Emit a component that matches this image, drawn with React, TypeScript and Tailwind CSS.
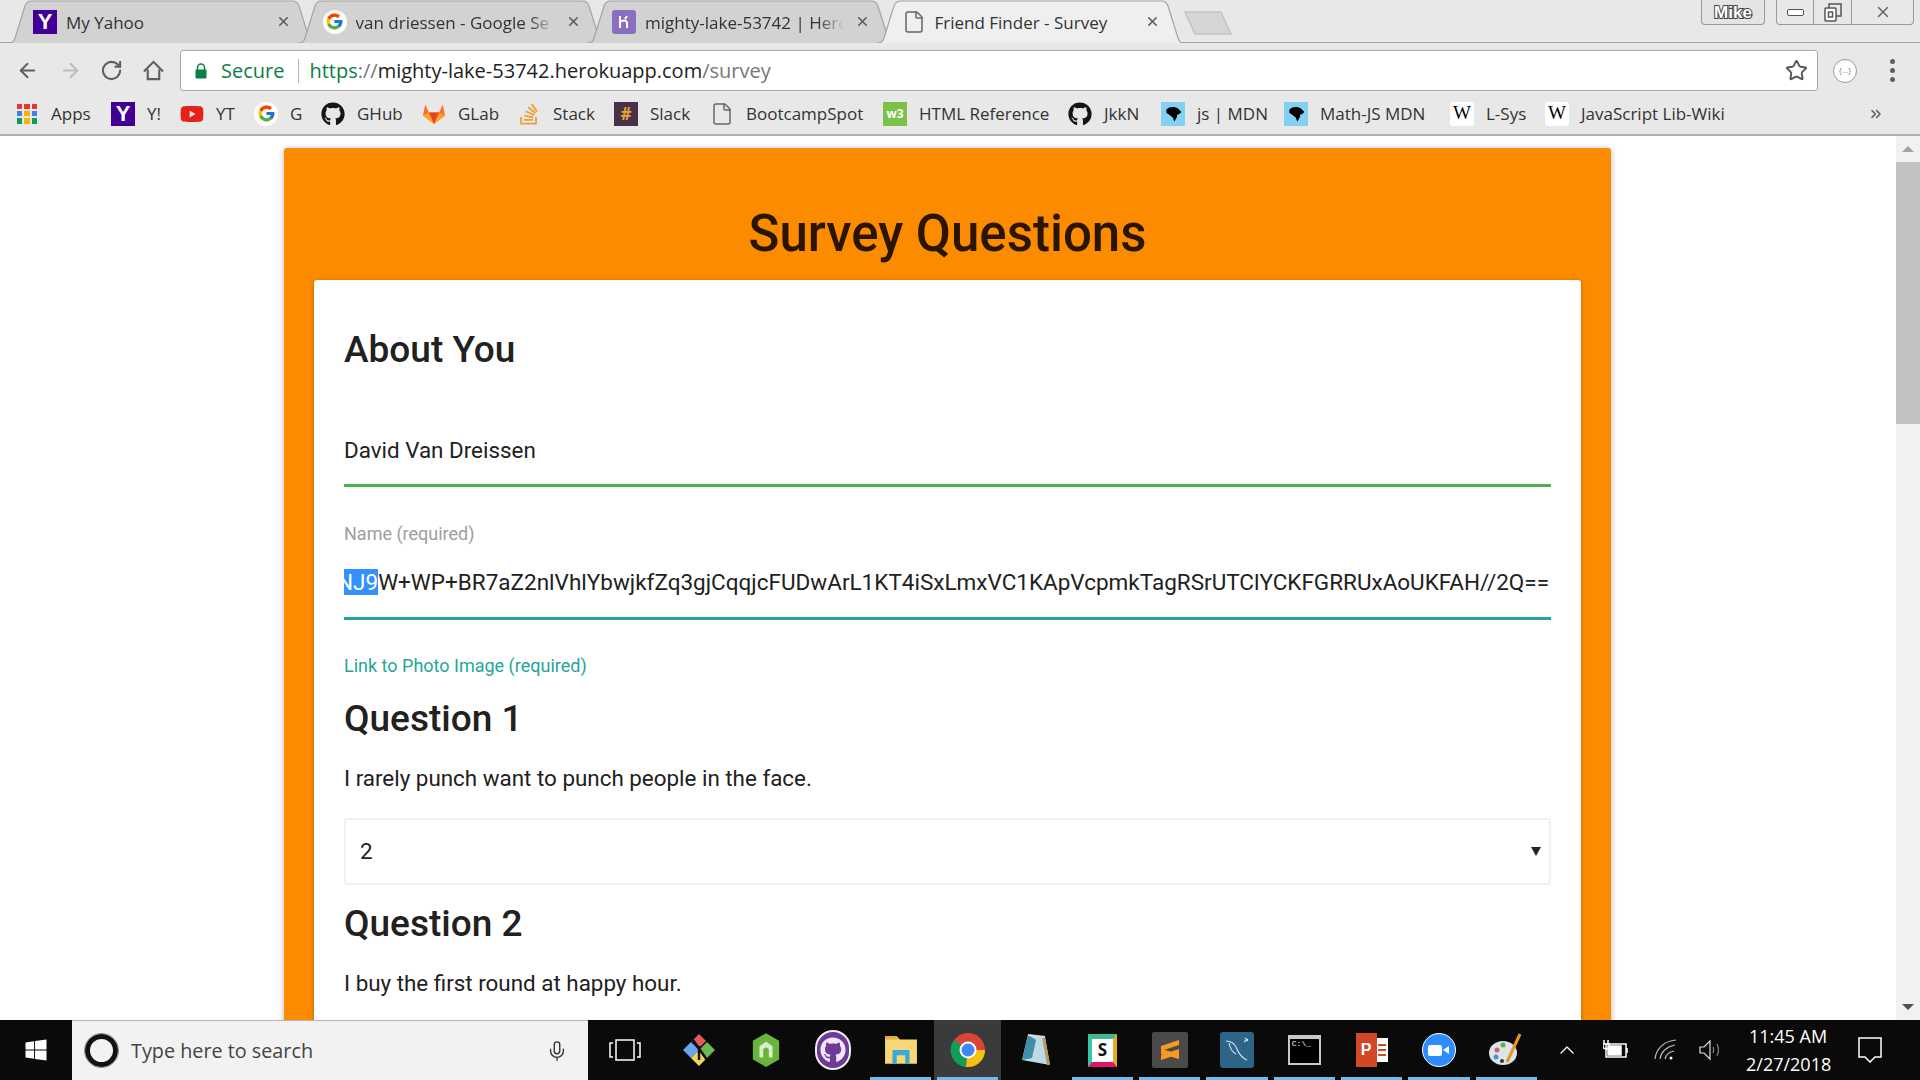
import React from 'react';
import { ArrowLeft, ArrowRight, RotateCw, Star, X, ChevronUp, ChevronsRight, Mic, File } from 'lucide-react';
import { FaGithub, FaStackOverflow, FaYoutube, FaWindows } from 'react-icons/fa';
import { FcGoogle } from 'react-icons/fc';

const chromeFont = "font-['Open_Sans',sans-serif]";

const YahooIcon = ({ size }: { size: string }) => (
  <span className={`${size} flex items-center justify-center bg-[#410093] text-white font-bold text-[22px] font-['Liberation_Sans',sans-serif]`}>Y</span>
);

const GoogleIcon = () => (
  <span className="w-6 h-6 rounded-full bg-white flex items-center justify-center">
    <FcGoogle className="w-[19px] h-[19px]" />
  </span>
);

const GitlabIcon = () => (
  <svg viewBox="0 0 24 24" className="w-6 h-6">
    <path d="M12 22 1 13.5l2.2-11 3.6 8h10.4l3.6-8 2.2 11z" fill="#fc6d26" />
    <path d="M12 22 6.8 10.5h10.4z" fill="#e24329" />
    <path d="M12 22 1 13.5l5.8-3z" fill="#fca326" />
    <path d="M12 22l11-8.500-5.800-3z" fill="#fca326" />
  </svg>
);

const HerokuIcon = () => (
  <span className="w-6 h-6 rounded-[3px] bg-[#8a6fc0] flex items-center justify-center">
    <svg viewBox="0 0 16 16" className="w-4 h-4" fill="none" stroke="#fff" strokeWidth="2">
      <path d="M4 2v12M4 8c3-2 7-2 7 1v5M11 2 9 5" />
    </svg>
  </span>
);

const MdnIcon = () => (
  <span className="w-6 h-6 bg-[#83d0f2] flex items-center justify-center">
    <svg viewBox="0 0 24 24" className="w-[19px] h-[19px]" fill="#000">
      <path d="M3 7c4-4 11-4 15-1l4 4-3 3-2 0-1 4-3 5-2-5-4-3-4-3z" />
    </svg>
  </span>
);

const WikiIcon = () => (
  <span className="w-6 h-6 rounded-[3px] bg-white flex items-center justify-center text-[19px] text-black font-['Liberation_Serif',serif]">W</span>
);

const AppsIcon = () => {
  const colors = ['#e33b2e', '#e33b2e', '#e33b2e', '#3f7fe8', '#f4b400', '#3f7fe8', '#0f9d58', '#f4b400', '#0f9d58'];
  return (
    <span className="w-5 h-5 mr-[2px] grid grid-cols-3 gap-[2px]">
      {colors.map((c, i) => (
        <span key={i} className="block" style={{ backgroundColor: c }} />
      ))}
    </span>
  );
};

const bookmarks = [
  { label: 'Apps', width: 'w-[41px]', icon: <AppsIcon /> },
  { label: 'Y!', width: 'w-[14px]', icon: <YahooIcon size="w-6 h-6" /> },
  { label: 'YT', width: 'w-[19px]', icon: <FaYoutube className="w-6 h-6 text-[#e62117]" /> },
  { label: 'G', width: 'w-[12px]', icon: <GoogleIcon /> },
  { label: 'GHub', width: 'w-[46px]', icon: <FaGithub className="w-6 h-6 text-[#161514]" /> },
  { label: 'GLab', width: 'w-[40px]', icon: <GitlabIcon /> },
  { label: 'Stack', width: 'w-[42px]', icon: <FaStackOverflow className="w-6 h-6 text-[#e8a33d]" /> },
  {
    label: 'Slack',
    width: 'w-[41px]',
    icon: <span className="w-6 h-6 bg-[#4a3146] flex items-center justify-center text-[#e0a63a] font-bold text-[17px]">#</span>,
  },
  { label: 'BootcampSpot', width: 'w-[118px]', icon: <File className="w-6 h-6 text-[#666]" strokeWidth={1.5} /> },
  {
    label: 'HTML Reference',
    width: 'w-[130px]',
    icon: <span className="w-6 h-6 bg-[#7cc24a] flex items-center justify-center text-white font-bold text-[12px]">w3</span>,
  },
  { label: 'JkkN', width: 'w-[38px]', icon: <FaGithub className="w-6 h-6 text-[#161514]" /> },
  { label: 'js | MDN', width: 'w-[68px]', icon: <MdnIcon /> },
  { label: 'Math-JS MDN', width: 'w-[111px]', icon: <MdnIcon /> },
  { label: 'L-Sys', width: 'w-[40px]', icon: <WikiIcon /> },
  { label: 'JavaScript Lib-Wiki', width: 'w-[149px]', icon: <WikiIcon /> },
];

const TabShape = ({ active }: { active: boolean }) => (
  <svg viewBox="0 0 308 43" className="absolute inset-0 w-full h-full">
    <path
      d="M0 43 C5 43 6 41 7 38 L17 6 C18 3 20 1 24 1 L284 1 C288 1 290 3 291 6 L301 38 C302 41 303 43 308 43"
      fill={active ? '#efefef' : '#d2d2d2'}
      stroke="#a4a4a4"
      strokeWidth="1.200"
    />
  </svg>
);

const Tab = ({ title, icon, active = false, first = false, fade = false }: { title: string; icon: React.ReactNode; active?: boolean; first?: boolean; fade?: boolean }) => (
  <div className={`relative w-[308px] h-[43px] shrink-0 ${first ? '' : '-ml-[18.5px]'} ${active ? 'z-10' : ''}`}>
    <TabShape active={active} />
    <div className="relative h-full flex items-center pl-[25px] pr-[25px] gap-[9px]">
      {icon}
      <span
        className={`flex-1 min-w-0 pt-[2px] whitespace-nowrap text-[17px] text-[#333] ${chromeFont} ${fade ? '[mask-image:linear-gradient(to_right,black_86%,transparent_99%)]' : ''}`}
      >
        {title}
      </span>
      <X className="w-[15px] h-[15px] text-[#5a5a5a] shrink-0" strokeWidth={2.500} />
    </div>
  </div>
);

const TabStrip = () => (
  <div className="h-[43px] relative flex pl-2 bg-[#e8e8e8] border-b border-[#a4a4a4]">
    <Tab first title="My Yahoo" icon={<YahooIcon size="w-6 h-6 shrink-0" />} />
    <Tab fade title="van driessen - Google Se" icon={<span className="shrink-0"><GoogleIcon /></span>} />
    <Tab fade title="mighty-lake-53742 | Herc" icon={<span className="shrink-0"><HerokuIcon /></span>} />
    <Tab active title="Friend Finder - Survey" icon={<File className="w-6 h-6 text-[#666] shrink-0" strokeWidth={1.500} />} />
    <svg viewBox="0 0 50 24" className="w-[50px] h-[24px] mt-[11px] -translate-x-[2px] shrink-0">
      <path d="M2 1h36l10 22H12z" fill="#d6d6d6" stroke="#c2c2c2" strokeWidth="1.500" strokeLinejoin="round" />
    </svg>
    <div className="ml-auto flex items-start pr-[6px]">
      <div className="w-[64px] h-[25px] border border-t-0 border-[#9a9a9a] rounded-b-[4px] bg-[#e4e4e4] text-center text-[17px] leading-[25px] font-bold text-white [-webkit-text-stroke:2px_#444] [paint-order:stroke_fill] font-['Liberation_Sans',sans-serif]">
        Mike
      </div>
      <div className="ml-[11px] w-[138px] h-[25px] flex border border-t-0 border-[#9a9a9a] rounded-b-[4px]">
        <div className="w-[37px] flex items-center justify-center border-r border-[#9a9a9a]">
          <span className="w-[17px] h-[7px] rounded-[2px] border border-[#555] bg-white" />
        </div>
        <div className="w-[38px] flex items-center justify-center border-r border-[#9a9a9a]">
          <svg viewBox="0 0 18 20" className="w-[18px] h-[20px]" fill="none" stroke="#555" strokeWidth="1.500">
            <rect x="1" y="6" width="11" height="13" rx="1" fill="#fff" />
            <path d="M5 6V2h12v12h-5" />
            <rect x="4.500" y="10" width="4" height="5" />
          </svg>
        </div>
        <div className="flex-1 flex items-center justify-center">
          <X className="w-[18px] h-[18px] text-[#666]" strokeWidth={2} />
        </div>
      </div>
    </div>
  </div>
);

const Toolbar = () => (
  <div className="h-[48px] pt-[7px] flex items-center bg-[#e8e8e8] pl-[16px]">
    <ArrowLeft className="w-[23px] h-[23px] text-[#5f5f5f]" strokeWidth={2} />
    <ArrowRight className="w-[23px] h-[23px] text-[#bdbdbd] ml-[20px]" strokeWidth={2} />
    <RotateCw className="w-[23px] h-[23px] text-[#5f5f5f] ml-[18px]" strokeWidth={2.200} />
    <svg viewBox="0 0 24 24" className="w-[23px] h-[23px] ml-[19px]" fill="none" stroke="#5f5f5f" strokeWidth="2.200">
      <path d="M2 13 12 3l10 10M6 11v10h12V11" />
    </svg>
    <div className="ml-[15px] w-[1638px] h-[41px] bg-white border border-[#a9a9a9] rounded-[3px] flex items-center pl-[14px] pr-[9px]">
      <svg viewBox="0 0 12 16" className="w-[12px] h-[16px]">
        <path d="M2.500 7V4.500a3.500 3.500 0 0 1 7 0V7" fill="none" stroke="#0b8043" strokeWidth="1.500" />
        <rect x="0.500" y="6.500" width="11" height="9" rx="1" fill="#0b8043" />
      </svg>
      <span className={`ml-[14px] text-[20px] text-[#0b8043] ${chromeFont}`}>Secure</span>
      <span className="ml-[14px] w-px h-[24px] bg-[#b5b5b5]" />
      <span className={`ml-[10px] flex-1 text-[20px] whitespace-nowrap ${chromeFont}`}>
        <span className="text-[#0b8043]">https</span>
        <span className="text-[#777]">://</span>
        <span className="text-[#222]">mighty-lake-53742.herokuapp.com</span>
        <span className="text-[#777]">/survey</span>
      </span>
      <Star className="w-[23px] h-[23px] text-[#555]" strokeWidth={2} />
    </div>
    <div className="ml-[15px] w-[24px] h-[24px] rounded-full border border-[#999] bg-white flex items-center justify-center text-[8px] text-[#888] font-['Liberation_Sans',sans-serif]">
      {'{...}'}
    </div>
    <div className="ml-[33px] flex flex-col gap-[4px]">
      <span className="w-[5px] h-[5px] rounded-full bg-[#5f5f5f]" />
      <span className="w-[5px] h-[5px] rounded-full bg-[#5f5f5f]" />
      <span className="w-[5px] h-[5px] rounded-full bg-[#5f5f5f]" />
    </div>
  </div>
);

const BookmarksBar = () => (
  <div className="h-[45px] pt-[2px] flex items-center bg-[#e8e8e8] border-b-2 border-[#b0b0b0] pl-[17px] pr-[36px] gap-[19px]">
    {bookmarks.map((b) => (
      <div key={b.label} className="flex items-center gap-[12px] shrink-0">
        {b.icon}
        <span className={`${b.width} whitespace-nowrap text-[17px] text-[#333] ${chromeFont}`}>{b.label}</span>
      </div>
    ))}
    <ChevronsRight className="ml-auto w-[16px] h-[16px] text-[#666]" strokeWidth={2.500} />
  </div>
);

const Scrollbar = () => (
  <div className="w-[24px] shrink-0 bg-[#f1f1f1] flex flex-col items-center relative">
    <div className="h-[26px] flex items-center justify-center">
      <span className="border-x-[6px] border-x-transparent border-b-[6px] border-b-[#a3a3a3]" />
    </div>
    <div className="w-full h-[262px] bg-[#c1c1c1]" />
    <div className="mt-auto h-[26px] flex items-center justify-center">
      <span className="border-x-[6px] border-x-transparent border-t-[6px] border-t-[#505050]" />
    </div>
  </div>
);

const Question = ({ title, text, value }: { title: string; text: string; value?: string }) => (
  <div>
    <h4 className="text-[37px] leading-[44px] font-medium text-[#212121]">{title}</h4>
    <p className="mt-[23px] text-[22.400px] leading-[29px] text-[#212121]">{text}</p>
    {value && (
      <div className="mt-[25px] h-[67px] border-2 border-[#f1f1f1] rounded-[3px] flex items-center justify-between pl-[14px] pr-[8px] text-[22.400px] text-[#212121]">
        <span>{value}</span>
        <span className="border-x-[5px] border-x-transparent border-t-[9px] border-t-[#222]" />
      </div>
    )}
  </div>
);

const Survey = () => (
  <div className="flex-1 min-w-0 overflow-hidden bg-white pt-[12px] pr-[1px] font-['Roboto',sans-serif]">
    <div className="mx-auto w-[1327px] bg-[#fd8b00] rounded-[3px] px-[30px] shadow-[0_1px_6px_rgba(0,0,0,0.3)]">
      <h1 className="h-[132px] flex items-center justify-center pt-[40px] text-[51px] font-medium text-[#2a1600]">Survey Questions</h1>
      <div className="bg-white rounded-[3px] px-[30px] pb-[120px] shadow-[0_1px_4px_rgba(0,0,0,0.3)]">
        <h2 className="pt-[47px] text-[37px] leading-[46px] font-medium text-[#212121]">About You</h2>
        <div className="mt-[60px] h-[34px] leading-[34px] text-[22.400px] text-[#212121]">David Van Dreissen</div>
        <div className="mt-[17px] h-[3px] bg-[#4caf50]" />
        <div className="mt-[35px] text-[18px] leading-[24px] text-[#9e9e9e]">Name (required)</div>
        <div className="mt-[23px] h-[27px] leading-[27px] overflow-hidden whitespace-nowrap text-[22.500px] text-[#212121]">
          <div className="-ml-[7px]">
            <span className="bg-[#3390ff] text-white">NJ9</span>
            W+WP+BR7aZ2nlVhlYbwjkfZq3gjCqqjcFUDwArL1KT4iSxLmxVC1KApVcpmkTagRSrUTClYCKFGRRUxAoUKFAH//2Q==
          </div>
        </div>
        <div className="mt-[21px] h-[3px] bg-[#26a69a]" />
        <div className="mt-[34px] text-[18px] leading-[24px] text-[#26a69a]">Link to Photo Image (required)</div>
        <div className="mt-[19px]">
          <Question title="Question 1" text="I rarely punch want to punch people in the face." value="2" />
        </div>
        <div className="mt-[17px]">
          <Question title="Question 2" text="I buy the first round at happy hour." />
        </div>
      </div>
    </div>
  </div>
);

const Underlined = ({ open = false, active = false, children }: { open?: boolean; active?: boolean; children: React.ReactNode }) => (
  <div className={`relative w-[67.300px] h-full shrink-0 flex items-center justify-center ${active ? 'bg-[#3b3b3b]' : ''}`}>
    {children}
    {open && <span className="absolute bottom-0 left-[3px] right-[3px] h-[3px] bg-[#76b9ed]" />}
  </div>
);

const Taskbar = () => (
  <div className="h-[60px] shrink-0 flex items-center bg-[#0a0a0a] text-white">
    <div className="w-[72px] flex items-center justify-center">
      <FaWindows className="w-[24px] h-[24px]" />
    </div>
    <div className="w-[516px] h-full bg-[#f2f2f2] border-t border-[#b5b5b5] flex items-center pl-[13px] pr-[20px]">
      <span className="w-[33px] h-[33px] rounded-full border-[5px] border-[#111] outline-1 outline-[#888]" />
      <span className={`ml-[13px] flex-1 text-[19.800px] text-[#444] ${chromeFont}`}>Type here to search</span>
      <Mic className="w-[22px] h-[26px] text-[#333]" strokeWidth={1.500} />
    </div>
    <div className="w-[77px] pr-[4px] flex items-center justify-center">
      <svg viewBox="0 0 32 24" className="w-[32px] h-[24px]" fill="none" stroke="#fff" strokeWidth="1.500">
        <rect x="7" y="2" width="18" height="20" />
        <path d="M4 5H1v14h3M28 5h3v14h-3" />
      </svg>
    </div>
    <Underlined>
      <svg viewBox="0 0 36 36" className="w-[36px] h-[36px]">
        <path d="M18 2l7 7-7 7-7-7z" fill="#e25b5b" />
        <path d="M2 18l8-8 8 8-8 8z" fill="#6aa5f0" />
        <path d="M34 18l-8-8-8 8 8 8z" fill="#6cbb4e" />
        <path d="M18 34l-8-8 8-8 8 8z" fill="#f2d35c" />
        <path d="M12 8l14 20M18 14v14" stroke="#111" strokeWidth="2.500" />
      </svg>
    </Underlined>
    <Underlined>
      <svg viewBox="0 0 32 38" className="w-[30px] h-[36px]">
        <path d="M16 1l14 8v20l-14 8-14-8V9z" fill="#69b53b" />
        <path d="M9 27V15l7-5 7 5v12h-4v-9l-3-2-3 2v9z" fill="#d8ecd0" />
      </svg>
    </Underlined>
    <Underlined>
      <div className="w-[36px] h-[40px] rounded-full bg-[#f0f0f0] p-[2px]">
        <div className="w-full h-full rounded-full bg-[#6e3a96] flex items-center justify-center">
          <FaGithub className="w-[26px] h-[26px] text-[#f0e6f7]" />
        </div>
      </div>
    </Underlined>
    <Underlined open>
      <svg viewBox="0 0 32 32" className="w-[34px] h-[34px]">
        <path d="M1 3h11l3 3h16v23H1z" fill="#f8d775" />
        <path d="M1 3h11l3 3H1z" fill="#e0b040" />
        <path d="M8 29V16h16v13h-4v-8h-8v8z" fill="#39a9dc" />
      </svg>
    </Underlined>
    <Underlined open active>
      <svg viewBox="0 0 36 36" className="w-[36px] h-[36px]">
        <circle cx="18" cy="18" r="17" fill="#db4437" />
        <path d="M18 18L4 8A17 17 0 0 0 16 35z" fill="#0f9d58" />
        <path d="M18 18L35 18A17 17 0 0 1 16 35z" fill="#f4c20d" />
        <circle cx="18" cy="18" r="8.500" fill="#fff" />
        <circle cx="18" cy="18" r="6.500" fill="#4285f4" />
      </svg>
    </Underlined>
    <Underlined>
      <svg viewBox="0 0 32 36" className="w-[32px] h-[36px]">
        <path d="M9 3 26 5l5 28-28-5z" fill="#bcdbe6" />
        <path d="M9 3 3 28l10-2 4-18z" fill="#3f8fa8" />
        <path d="M26 5l5 28-3 0-5-28z" fill="#b79a5e" />
        <path d="M9 3 26 5" stroke="#ddd" strokeWidth="2" />
      </svg>
    </Underlined>
    <Underlined open>
      <div className="relative w-[29px] h-[33px] bg-white flex items-center justify-center text-[#111] font-bold text-[17px] border-t-[5px] border-t-[#3eb991] border-r-[4px] border-r-[#e9a820] border-b-[5px] border-b-[#e01563] border-l-[4px] border-l-[#36c5ab]">
        S
      </div>
    </Underlined>
    <Underlined open>
      <div className="w-[36px] h-[36px] rounded-[2px] bg-[#4a4a4a] flex items-center justify-center">
        <svg viewBox="0 0 20 24" className="w-[20px] h-[24px]" fill="#f79a1e">
          <path d="M1 8 19 2v5L1 13zM1 11l18 5v5L1 16zM1 17l18-6v5L1 22z" />
        </svg>
      </div>
    </Underlined>
    <Underlined open>
      <div className="w-[34px] h-[36px] rounded-[3px] bg-[#2c6587] flex items-center justify-center">
        <svg viewBox="0 0 28 30" className="w-[28px] h-[30px]" fill="none" stroke="#cfe0ea" strokeWidth="1.200">
          <path d="M3 6c5 0 9 3 11 8s5 9 10 11M6 8c1 5 3 9 7 11M22 3l3 3M21 7l4-3" />
        </svg>
      </div>
    </Underlined>
    <Underlined open>
      <div className="w-[33px] h-[30px] bg-black border-2 border-[#c8c8c8] border-t-[4px] pl-[2px] text-[8px] leading-[10px] text-white font-['Liberation_Mono',monospace]">
        C:\_
      </div>
    </Underlined>
    <Underlined open>
      <div className="relative w-[32px] h-[34px] flex items-center">
        <div className="absolute right-0 top-[5px] w-[22px] h-[24px] bg-white flex flex-col items-end justify-center gap-[3px] pr-[2px]">
          <span className="w-[8px] h-[2px] bg-[#d24726]" />
          <span className="w-[8px] h-[2px] bg-[#d24726]" />
          <span className="w-[8px] h-[2px] bg-[#d24726]" />
        </div>
        <div className="relative w-[21px] h-[34px] bg-[#d24726] flex items-center justify-center text-white font-bold text-[16px] font-['Liberation_Sans',sans-serif]">P</div>
      </div>
    </Underlined>
    <Underlined open>
      <div className="w-[34px] h-[34px] rounded-full bg-[#2d8cff] border border-white flex items-center justify-center gap-[1px]">
        <span className="w-[14px] h-[11px] rounded-[2px] bg-white" />
        <span className="border-y-[4px] border-y-transparent border-r-[6px] border-r-white" />
      </div>
    </Underlined>
    <Underlined open>
      <svg viewBox="0 0 36 36" className="w-[36px] h-[36px]">
        <ellipse cx="15" cy="21" rx="14" ry="12" fill="#dce6ea" />
        <circle cx="9" cy="18" r="2.500" fill="#e25b5b" />
        <circle cx="15" cy="13" r="2.500" fill="#5fb04c" />
        <circle cx="8" cy="25" r="2.500" fill="#4a90d9" />
        <circle cx="14" cy="29" r="2" fill="#333" />
        <path d="M32 2 19 30" stroke="#e8952c" strokeWidth="3" />
      </svg>
    </Underlined>
    <div className="ml-auto h-full flex items-center pr-[10px]">
      <div className="w-[48px] flex justify-center">
        <ChevronUp className="w-[24px] h-[24px] text-white" strokeWidth={1.300} />
      </div>
      <div className="w-[50px] flex justify-center">
        <svg viewBox="0 0 26 22" className="w-[26px] h-[22px]" fill="none" stroke="#fff" strokeWidth="1.500">
          <rect x="3" y="5" width="20" height="13" />
          <rect x="5" y="7" width="13" height="9" fill="#fff" />
          <path d="M24 9v5M1 1v4M5 1v4M0 5h6v2a3 3 0 0 1-6 0z" />
        </svg>
      </div>
      <div className="w-[50px] flex justify-center">
        <svg viewBox="0 0 24 22" className="w-[24px] h-[22px]" fill="none" stroke="#bbb" strokeWidth="1.200">
          <path d="M1 20C2 10 10 2 22 1M6 20c1-7 6-12 15-14M11 20c1-4 3-7 9-8" />
          <circle cx="17" cy="19" r="1.500" fill="#fff" stroke="none" />
        </svg>
      </div>
      <div className="w-[40px] flex justify-center">
        <svg viewBox="0 0 24 24" className="w-[24px] h-[24px]" fill="none" stroke="#ddd" strokeWidth="1.200">
          <path d="M1 9h4l6-6v18l-6-6H1z" />
          <path d="M14 9c1 2 1 4 0 6M18 6c2 4 2 8 0 12" stroke="#888" />
        </svg>
      </div>
      <div className={`ml-[15px] w-[84px] text-center text-[18px] leading-[28px] whitespace-nowrap text-white ${chromeFont}`}>
        <div>11:45 AM</div>
        <div>2/27/2018</div>
      </div>
      <div className="w-[80px] flex justify-center">
        <svg viewBox="0 0 24 26" className="w-[24px] h-[26px]" fill="none" stroke="#fff" strokeWidth="1.500">
          <path d="M1 1h22v19h-6l-5 5-5-5H1z" />
        </svg>
      </div>
    </div>
  </div>
);

export default function App() {
  return (
    <div className="h-screen flex flex-col overflow-hidden">
      <TabStrip />
      <Toolbar />
      <BookmarksBar />
      <div className="flex-1 min-h-0 flex">
        <Survey />
        <Scrollbar />
      </div>
      <Taskbar />
    </div>
  );
}
